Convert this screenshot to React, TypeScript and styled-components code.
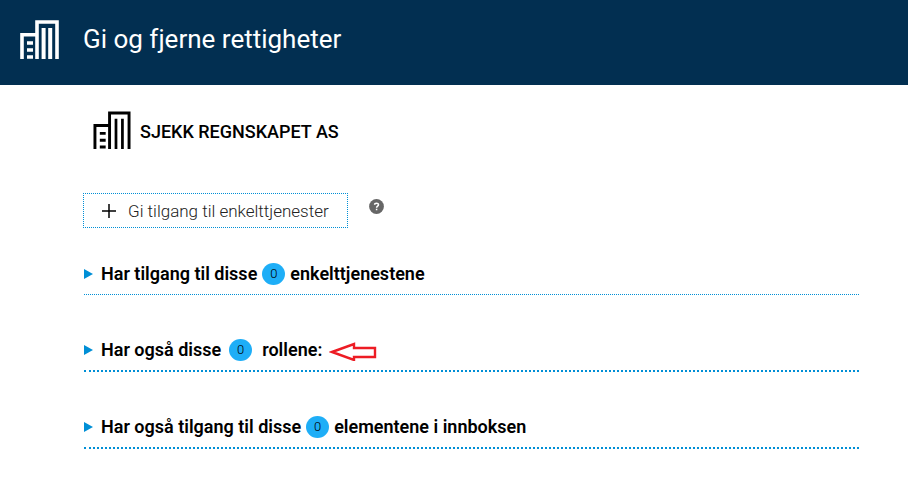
import React from "react";
import styled, { createGlobalStyle } from "styled-components";

const GlobalStyle = createGlobalStyle`
  * { box-sizing: border-box; }
  body {
    margin: 0;
    background: #fff;
    color: #000;
    font-family: Roboto, "Liberation Sans", sans-serif;
  }
`;

const Header = styled.header`
  display: flex;
  align-items: flex-start;
  gap: 24px;
  padding: 20px;
  min-height: 85px;
  background: #022f51;
  color: #fff;
`;

const Title = styled.h1`
  margin: 0;
  font-size: 26px;
  line-height: 38px;
  font-weight: 400;
`;

const Content = styled.main`
  padding: 26px 49px 40px 83px;
`;

const Company = styled.h2`
  display: flex;
  align-items: center;
  gap: 9px;
  margin: 0 0 44px;
  padding-left: 10px;
  font-size: 18px;
  line-height: 38px;
  font-weight: 500;
`;

const CompanyName = styled.span`
  padding-top: 4px;
  line-height: 34px;
`;

const Actions = styled.div`
  display: flex;
  align-items: flex-start;
  gap: 21px;
  margin-bottom: 35px;
`;

const AddButton = styled.button`
  display: flex;
  align-items: center;
  gap: 12px;
  padding: 0 18px;
  height: 35px;
  border: 1px dotted #008fd6;
  background: #fff;
  color: #222;
  font-family: inherit;
  font-size: 17px;
  font-weight: 300;
  cursor: pointer;
`;

const HelpButton = styled.button`
  display: flex;
  margin-top: 6px;
  padding: 0;
  border: 0;
  background: none;
  cursor: pointer;
`;

const Sections = styled.div`
  display: grid;
  gap: 44px;
  padding-left: 1px;
`;

const Section = styled.section<{ $line: number }>`
  padding-bottom: 9px;
  border-bottom: ${(p) => p.$line}px dotted #008fd6;
`;

const Heading = styled.h3`
  display: flex;
  align-items: center;
  gap: 7px;
  height: 22px;
  margin: 0;
`;

const Toggle = styled.button`
  display: flex;
  align-items: center;
  padding: 0;
  border: 0;
  background: none;
  color: #000;
  font-family: inherit;
  font-size: 18px;
  line-height: 22px;
  font-weight: 600;
  cursor: pointer;
`;

const Caret = styled.svg`
  margin-right: 8px;
`;

const Badge = styled.span<{ $wide?: boolean }>`
  width: 23px;
  height: 22px;
  margin: ${(p) => (p.$wide ? "0 10px 0 8px" : "0 5px")};
  border-radius: 50%;
  background: #1eaef7;
  font-size: 13px;
  font-weight: 300;
  text-align: center;
`;

const Arrow = styled.svg`
  align-self: flex-end;
`;

const Building = ({ size, outline, bars }: { size: number; outline: number; bars: number }) => (
  <svg width={size} height={size} viewBox="0 0 39 39" fill="none" stroke="currentColor" aria-hidden="true">
    <path d="M2 39V14.8H17M17 39V2H37V39" strokeWidth={outline} />
    <path d="M23.6 8V39M30.2 8V39" strokeWidth={bars} />
    <path d="M7 23H13M7 30H13M7 37H13" strokeWidth={outline} />
  </svg>
);

const sections = [
  { before: "Har tilgang til disse", after: "enkelttjenestene", line: 1 },
  { before: "Har også disse", after: "rollene:", line: 2, wide: true, marked: true },
  { before: "Har også tilgang til disse", after: "elementene i innboksen", line: 2 },
];

export default function App() {
  return (
    <>
      <GlobalStyle />
      <Header>
        <Building size={39} outline={3.6} bars={4} />
        <Title>Gi og fjerne rettigheter</Title>
      </Header>
      <Content>
        <Company>
          <Building size={38} outline={3} bars={2.8} />
          <CompanyName>SJEKK REGNSKAPET AS</CompanyName>
        </Company>
        <Actions>
          <AddButton type="button">
            <svg width="14" height="14" viewBox="0 0 14 14" stroke="#000" strokeWidth="1.5" aria-hidden="true">
              <path d="M7 0V14M0 7H14" />
            </svg>
            Gi tilgang til enkelttjenester
          </AddButton>
          <HelpButton type="button" aria-label="Hjelp">
            <svg width="15" height="15" viewBox="0 0 15 15" aria-hidden="true">
              <circle cx="7.5" cy="7.5" r="7.4" fill="#666" />
              <path d="M5.6 5.8C5.6 3.6 9.5 3.6 9.5 5.8C9.5 7.2 7.6 7.1 7.6 8.7M7.6 9.8V11.3" fill="none" stroke="#fff" strokeWidth="1.5" />
            </svg>
          </HelpButton>
        </Actions>
        <Sections>
          {sections.map((s) => (
            <Section key={s.before} $line={s.line}>
              <Heading>
                <Toggle type="button" aria-expanded={false}>
                  <Caret width="9" height="10" viewBox="0 0 9 10" aria-hidden="true">
                    <path d="M0 0L9 5L0 10Z" fill="#008fd6" />
                  </Caret>
                  {s.before}
                  <Badge $wide={s.wide}>0</Badge>
                  {s.after}
                </Toggle>
                {s.marked && (
                  <Arrow width="48" height="20" viewBox="0 0 48 20" aria-hidden="true">
                    <path d="M3 11L25 3V7H46V16H25V19Z" fill="#fff" stroke="#ed1c24" strokeWidth="2.4" />
                  </Arrow>
                )}
              </Heading>
            </Section>
          ))}
        </Sections>
      </Content>
    </>
  );
}
